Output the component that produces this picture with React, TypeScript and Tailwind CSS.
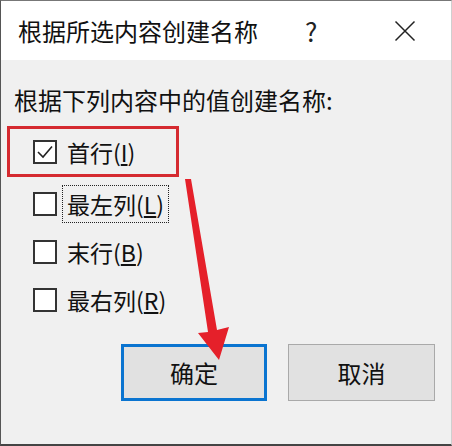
import React from "react";

const font = { fontFamily: '"Noto Sans CJK SC", "Noto Sans", sans-serif' };

function Box({ checked }: { checked?: boolean }) {
  return (
    <div className="w-[24px] h-[24px] border-2 border-[#333333] bg-white flex items-center justify-center shrink-0">
      {checked && (
        <svg width="18" height="18" viewBox="0 0 18 18">
          <path d="M2 9 L7 14 L16 3.5" fill="none" stroke="#222" strokeWidth="1.6" />
        </svg>
      )}
    </div>
  );
}

function Label({ text, k }: { text: string; k: string }) {
  return (
    <span className="text-[23px] leading-[26px] text-[#111]">
      {text}(<span className="underline underline-offset-2">{k}</span>)
    </span>
  );
}

export default function App() {
  return (
    <div style={font} className="relative w-[452px] h-[446px] overflow-hidden bg-[#f0f0f0] border-t border-l border-b-2 border-r border-t-[#777] border-l-[#555] border-b-[#444] border-r-[#cfcfcf] flex flex-col">
      <div className="h-[59px] bg-white flex items-center shrink-0">
        <div className="pl-[17px] text-[24px] leading-[28px] text-[#111] w-[292px]">根据所选内容创建名称</div>
        <div className="text-[26px] leading-[28px] text-[#222] w-[101px] pl-[12px]">?</div>
        <svg width="22" height="22" viewBox="0 0 22 22">
          <path d="M1.5 1.5 L20.5 20.5 M20.5 1.5 L1.5 20.5" stroke="#222" strokeWidth="1.5" />
        </svg>
      </div>
      <div className="flex-1 flex flex-col">
        <div className="pl-[13px] pt-[26px] text-[24px] leading-[28px] text-[#111]">根据下列内容中的值创建名称:</div>
        <div className="ml-[6px] mt-[12px] w-[172px] h-[51px] border-[3px] border-[#d52a30] flex items-center pl-[23px] gap-[10px]">
          <Box checked />
          <Label text="首行" k="I" />
        </div>
        <div className="flex items-center pl-[32px] mt-[7px] h-[40px]">
          <Box />
          <div className="ml-[5px] h-[38px] px-[4px] border border-dotted border-[#222] flex items-center">
            <Label text="最左列" k="L" />
          </div>
        </div>
        <div className="flex items-center pl-[32px] gap-[10px] mt-[8px] h-[40px]">
          <Box />
          <Label text="末行" k="B" />
        </div>
        <div className="flex items-center pl-[32px] gap-[10px] mt-[8px] h-[40px]">
          <Box />
          <Label text="最右列" k="R" />
        </div>
        <div className="flex pl-[120px] mt-[24px] gap-[21px]">
          <button className="w-[146px] h-[57px] border-[3px] border-[#0a74d0] bg-[#e1e1e1] text-[24px] text-[#111]">确定</button>
          <button className="w-[147px] h-[57px] border border-[#a9a9a9] bg-[#e1e1e1] text-[24px] text-[#111]">取消</button>
        </div>
      </div>
      <svg className="absolute left-0 top-0 pointer-events-none" width="452" height="446" viewBox="0 0 452 446">
        <polygon points="184,178 190,178 216,329 228,326 218,359 197,332 207,331" fill="#e5202a" />
      </svg>
    </div>
  );
}
